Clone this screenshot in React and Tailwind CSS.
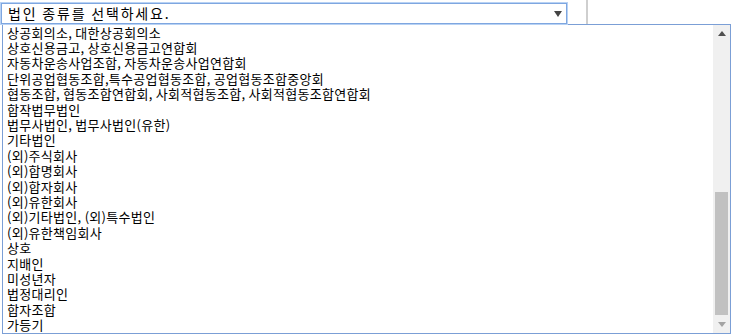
import React from "react";

const items = [
  "상공회의소, 대한상공회의소",
  "상호신용금고, 상호신용금고연합회",
  "자동차운송사업조합, 자동차운송사업연합회",
  "단위공업협동조합,특수공업협동조합, 공업협동조합중앙회",
  "협동조합, 협동조합연합회, 사회적협동조합, 사회적협동조합연합회",
  "합작법무법인",
  "법무사법인, 법무사법인(유한)",
  "기타법인",
  "(외)주식회사",
  "(외)합명회사",
  "(외)합자회사",
  "(외)유한회사",
  "(외)기타법인, (외)특수법인",
  "(외)유한책임회사",
  "상호",
  "지배인",
  "미성년자",
  "법정대리인",
  "합자조합",
  "가등기",
];

const App = () => {
  return (
    <div
      className="w-[731px] h-[335px] bg-white overflow-hidden text-black"
      style={{ fontFamily: '"Noto Sans CJK KR", "Noto Sans", sans-serif' }}
    >
      {/* select row */}
      <div className="flex items-start h-[24px]">
        <div className="mt-[3px] ml-[1px] w-[566px] h-[21px] border border-[#7ea6e0] ring-1 ring-[#b8d2f4] flex items-center justify-between pl-[6px] pr-[4px]">
          <span className="text-[14px] leading-[15px] tracking-[1.8px]">법인 종류를 선택하세요.</span>
          <svg width="8" height="6" viewBox="0 0 8 6">
            <path d="M0 0 H8 L4 6 Z" fill="#444" />
          </svg>
        </div>
        <div className="ml-[19px] w-[2px] h-[24px] bg-[#cfcfcf]" />
      </div>

      {/* open list */}
      <div className="ml-[2px] w-[729px] h-[310px] border border-[#7b9fd6] flex">
        <div className="flex-1 flex flex-col overflow-hidden">
          {items.map((item, i) => (
            <div
              key={i}
              className="h-[15.4px] shrink-0 flex items-center pl-[4px] text-[13px] leading-[14px] tracking-[0.28px] whitespace-nowrap"
            >
              {item}
            </div>
          ))}
        </div>
        <div className="w-[17px] h-full bg-[#f0f0f0] flex flex-col items-center">
          <div className="h-[17px] w-full flex items-center justify-center">
            <svg width="8" height="5" viewBox="0 0 8 5">
              <path d="M0 5 L4 0 L8 5 Z" fill="#505050" />
            </svg>
          </div>
          <div className="flex-1 w-full flex flex-col justify-end pb-[1px]">
            <div className="mx-[2px] h-[123px] bg-[#c1c1c1]" />
          </div>
          <div className="h-[17px] w-full flex items-center justify-center">
            <svg width="8" height="5" viewBox="0 0 8 5">
              <path d="M0 0 L8 0 L4 5 Z" fill="#a3a3a3" />
            </svg>
          </div>
        </div>
      </div>
    </div>
  );
};

export default App;
